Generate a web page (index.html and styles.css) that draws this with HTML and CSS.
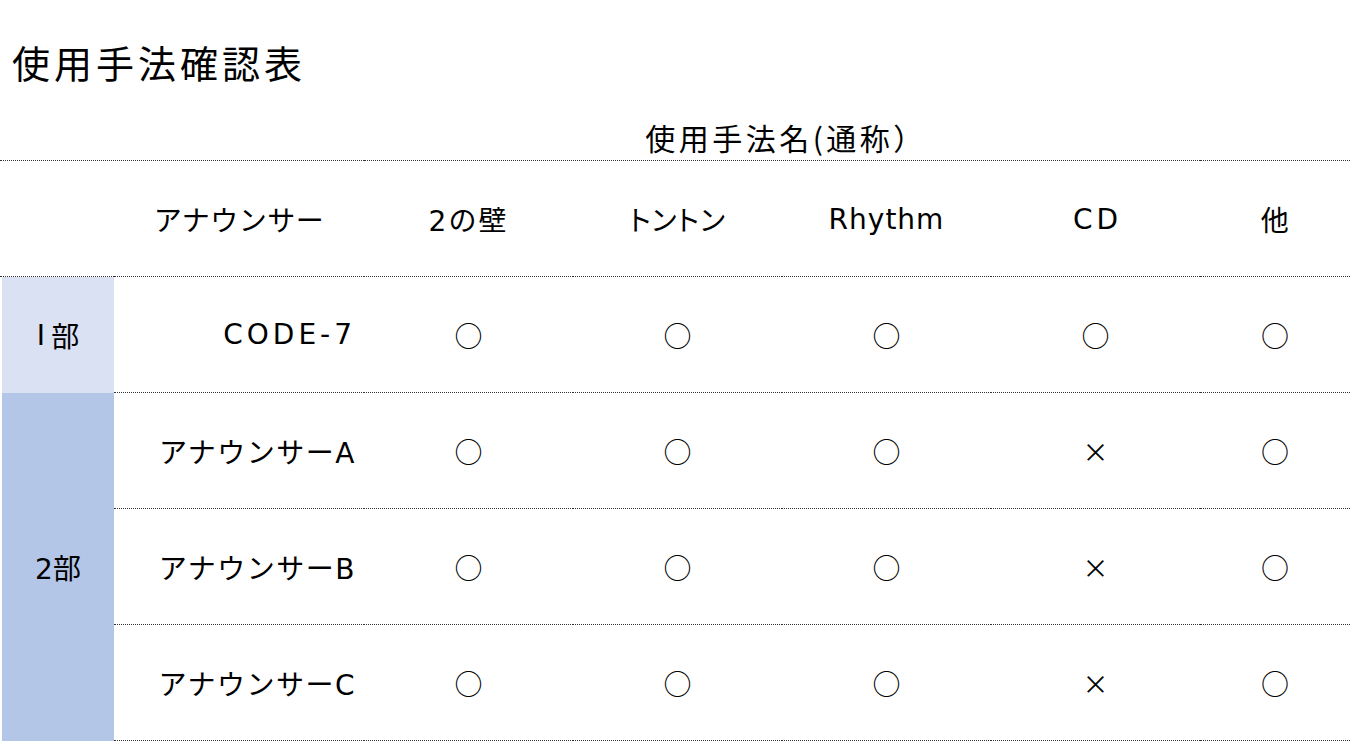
FILE: index.html
```html
<!DOCTYPE html>
<html lang="ja">
<head>
<meta charset="utf-8">
<title>使用手法確認表</title>
<link rel="stylesheet" href="styles.css">
</head>
<body>
<h1 class="title">使用手法確認表</h1>
<div class="table">
  <div class="cap-empty"></div>
  <div class="caption">使用手法名(通称）</div>
  <div class="cap-empty"></div>

  <div class="cell head blank"></div>
  <div class="cell head">アナウンサー</div>
  <div class="cell head num">2の壁</div>
  <div class="cell head kana">トントン</div>
  <div class="cell head latin rhythm">Rhythm</div>
  <div class="cell head latin cd">CD</div>
  <div class="cell head">他</div>

  <div class="label light"><span class="roman">I</span>部</div>
  <div class="cell name latin code">CODE-7</div>
  <div class="cell mark">○</div>
  <div class="cell mark">○</div>
  <div class="cell mark">○</div>
  <div class="cell mark">○</div>
  <div class="cell mark">○</div>

  <div class="label dark span3">2部</div>
  <div class="cell name">アナウンサーA</div>
  <div class="cell mark">○</div>
  <div class="cell mark">○</div>
  <div class="cell mark">○</div>
  <div class="cell mark cross">×</div>
  <div class="cell mark">○</div>

  <div class="cell name">アナウンサーB</div>
  <div class="cell mark">○</div>
  <div class="cell mark">○</div>
  <div class="cell mark">○</div>
  <div class="cell mark cross">×</div>
  <div class="cell mark">○</div>

  <div class="cell name">アナウンサーC</div>
  <div class="cell mark">○</div>
  <div class="cell mark">○</div>
  <div class="cell mark">○</div>
  <div class="cell mark cross">×</div>
  <div class="cell mark">○</div>
</div>
</body>
</html>
```
FILE: styles.css
```css
html, body {
  margin: 0;
  padding: 0;
  background: #ffffff;
}
body {
  width: 1350px;
  height: 744px;
  overflow: hidden;
  color: #000;
  font-family: "DejaVu Sans", "Noto Sans CJK JP", sans-serif;
}
.title {
  margin: 0;
  padding: 40px 0 0 12px;
  height: 44px;
  line-height: 44px;
  font-family: "Noto Sans CJK JP", sans-serif;
  font-size: 38px;
  font-weight: 400;
  letter-spacing: 4px;
}
.table {
  display: grid;
  grid-template-columns: 114px 250px 209px 209px 209px 209px 150px;
  grid-auto-rows: 116px;
  grid-template-rows: 44px;
  margin-top: 33px;
}
.cap-empty,
.caption {
  border-bottom: 1px dotted #333;
}
.cap-empty:first-child {
  grid-column: 1 / 3;
}
.caption {
  grid-column: 3 / 7;
  text-align: center;
  font-family: "Noto Sans CJK JP", sans-serif;
  font-size: 30px;
  line-height: 40px;
  letter-spacing: 3.5px;
  padding-left: 8px;
  padding-top: 0;
}
.cell {
  display: flex;
  align-items: center;
  justify-content: center;
  font-size: 28px;
  letter-spacing: 0.5px;
  border-bottom: 1px dotted #333;
  box-sizing: border-box;
}
.head {
  padding-top: 1px;
}
.num {
  letter-spacing: 2px;
}
.kana {
  font-family: "Noto Sans CJK JP", sans-serif;
  font-feature-settings: "palt";
  letter-spacing: 1px;
}
.name {
  justify-content: flex-end;
  padding-right: 8px;
  letter-spacing: 1.5px;
}
.rhythm {
  letter-spacing: 1px;
}
.cd {
  letter-spacing: 4px;
  padding-left: 4px;
}
.code {
  letter-spacing: 4px;
  padding-right: 8px;
}
.mark {
  font-family: "Noto Sans CJK JP", sans-serif;
  font-size: 28px;
  letter-spacing: 0;
}
.cross {
  font-size: 26px;
}
.label {
  display: flex;
  align-items: center;
  justify-content: center;
  margin-left: 2px;
  font-size: 28px;
}
.roman {
  font-family: "DejaVu Sans", sans-serif;
  font-weight: 400;
  margin-right: 6px;
}
.light {
  background: #d9e1f2;
}
.dark {
  background: #b4c6e7;
}
.span3 {
  grid-row: span 3;
}
```
